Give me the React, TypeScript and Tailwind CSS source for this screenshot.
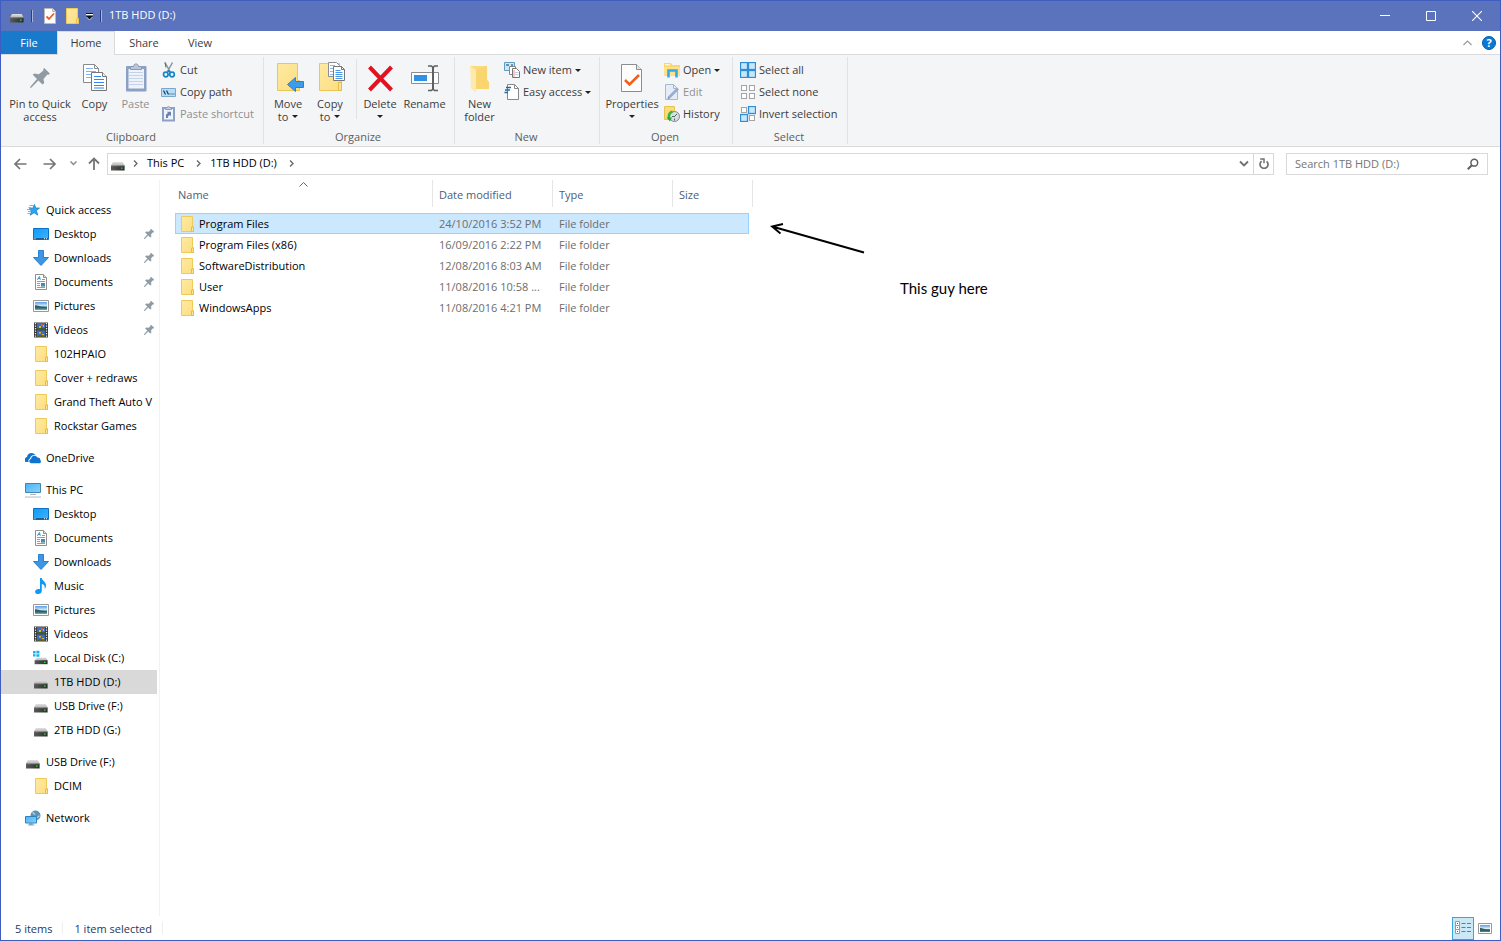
import type { ReactNode } from "react";

type IconProps = { className?: string };

function Art({ w, h, children, className = "" }: { w: number; h: number; children: ReactNode; className?: string }) {
  return (
    <svg width={w} height={h} viewBox={`0 0 ${w} ${h}`} fill="none" aria-hidden="true" className={`shrink-0 ${className}`}>
      {children}
    </svg>
  );
}

function Gradients() {
  return (
    <svg width="0" height="0" className="absolute" aria-hidden="true">
      <defs>
        <linearGradient id="folder" x1="0" y1="0" x2="1" y2="1">
          <stop offset="0" stopColor="#ffeaa2" />
          <stop offset="1" stopColor="#fcdd80" />
        </linearGradient>
        <linearGradient id="screen" x1="0" y1="0" x2="1" y2="1">
          <stop offset="0" stopColor="#4ab4f5" />
          <stop offset="1" stopColor="#8bd2fb" />
        </linearGradient>
        <linearGradient id="desk" x1="0" y1="0" x2="1" y2="1">
          <stop offset="0" stopColor="#0f9bf8" />
          <stop offset="1" stopColor="#3fb3ff" />
        </linearGradient>
        <linearGradient id="lid" x1="0" y1="0" x2="0" y2="1">
          <stop offset="0" stopColor="#e2e2e2" />
          <stop offset="1" stopColor="#b4b4b4" />
        </linearGradient>
        <linearGradient id="case" x1="0" y1="0" x2="1" y2="0">
          <stop offset="0" stopColor="#5a5a5a" />
          <stop offset="1" stopColor="#2c2c2c" />
        </linearGradient>
        <linearGradient id="photo" x1="0" y1="0" x2="0" y2="1">
          <stop offset="0" stopColor="#5b9be6" />
          <stop offset="0.5" stopColor="#d9eef8" />
          <stop offset="0.6" stopColor="#3f7f78" />
          <stop offset="1" stopColor="#6fa4c4" />
        </linearGradient>
      </defs>
    </svg>
  );
}

const Folder = ({ className }: IconProps) => (
  <Art w={16} h={16} className={className}>
    <path d="M2.5.5h11v10h1v5h-12z" fill="url(#folder)" stroke="#eecb58" />
    <path d="M12.5 15.5v-4.5h2v4.5z" fill="#ffe695" stroke="#e6bd45" />
  </Art>
);

const Drive = ({ className }: IconProps) => (
  <Art w={16} h={16} className={className}>
    <path d="M3 6h9.6l2 3.5H1z" fill="url(#lid)" />
    <path d="M1 9.500h13.6v5H1z" fill="url(#case)" />
    <path d="M1 9.500h13.6v.7H1z" fill="#8d8d8d" />
    <path d="M11 11.500h1.600v1.300H11z" fill="#35e23c" />
  </Art>
);

const SystemDrive = () => (
  <Art w={16} h={16}>
    <path d="M0 1h2.6v2.4H0zM3.4.8H6.4v2.6h-3zM0 4.2h2.6v2.4H0zM3.4 4.2h3v2.6h-3z" fill="#16b2ef" />
    <path d="M4 7.5h8.8l1.8 2.8H2z" fill="url(#lid)" />
    <path d="M1.6 10.2h13v4h-13z" fill="url(#case)" />
    <path d="M11 11.8h1.6V13H11z" fill="#35e23c" />
  </Art>
);

const Desktop = () => (
  <Art w={16} h={16}>
    <path d="M.5 2.5h15v11H.5z" fill="url(#desk)" stroke="#0c71c2" />
    <path d="M1 12h14v1.5H1z" fill="#155f9e" />
    <path d="M1.5 12.3h1v1h-1zM11 12.3h1v1h-1zM13 12.3h1v1h-1z" fill="#fff" />
  </Art>
);

const Downloads = () => (
  <Art w={16} h={16}>
    <path d="M5.5.5h5v7h5L8 15.5.5 7.5h5z" fill="#3d96e4" stroke="#2f7fcb" />
  </Art>
);

const Documents = () => (
  <Art w={16} h={16}>
    <path d="M2.5.5h8l3 3v12h-11z" fill="#fff" stroke="#8f8f8f" />
    <path d="M10.5.5v3h3" fill="#ddd" stroke="#8f8f8f" />
    <path d="M4.3 5.8 6.4 2.4l1 3.4M5 4.6h2" stroke="#2a8fc5" strokeWidth="0.9" />
    <path d="M9 5.5h3M4 7.5h8M4 9.5h3M4 11.5h3M4 13.5h8" stroke="#62aadb" />
    <path d="M8 9h4v3.4H8z" fill="#4d86b3" />
    <path d="M8 11h4v1.4H8z" fill="#4b9a79" />
  </Art>
);

const Pictures = () => (
  <Art w={16} h={16}>
    <path d="M.5 2.5h15v11H.5z" fill="#fff" stroke="#989898" />
    <path d="M2 4h12v8H2z" fill="url(#photo)" />
    <path d="M2 7.2c3 0 4.5 1.5 12 2v1.2H2z" fill="#2f6265" />
  </Art>
);

const Videos = () => (
  <Art w={16} h={16}>
    <path d="M1 .5h14v15H1z" fill="#39393b" />
    <path d="M4 1h8v6.5H4zM4 8.5h8V15H4z" fill="#3b6ec0" />
    <path d="M4 6h2l2-1 1 1h3v1.500H4z" fill="#46592a" />
    <path d="M6 4h2v2H6zM10 3h1v2h-1zM6 10h2v1.500H6zM9 12h2v1H9z" fill="#e3b42c" />
    <path d="M4 14l3-1 2 1h3v1H4z" fill="#5a5c2d" />
    <path d="M8 2h2v2H8z" fill="#d95a38" />
    <path d="M2.500 1v15M13.500 1v15" stroke="#f2f2f2" strokeWidth="1.2" strokeDasharray="1.2 1.3" />
  </Art>
);

const Music = () => (
  <Art w={16} h={16}>
    <path d="M7 0h1.8c.3 2.7 4.2 3.8 4.2 7.4 0 1.4-.6 2.6-1.4 3.600.7-3-.6-4.500-2.800-5v7c0 1.800-1.700 3-3.700 3-1.700 0-3-.9-3-2.300 0-1.600 1.700-2.700 3.500-2.700.5 0 1 .1 1.400.2z" fill="#0f98f4" />
  </Art>
);

const Star = () => (
  <Art w={16} h={16}>
    <path d="m9.500 2.500 1.200 3.500 3.800.1-3.100 2.500 1.300 4.500-3.600-2.400-3.900 2.500 1.400-4.300L4 6.900l3.700-.6z" fill="#2fa3ee" stroke="#1c83cc" strokeWidth="0.8" />
    <path d="M4.500 3.500h4M3.500 5.500h3M2 7.500h3M3 9.500h3M2.500 11.500h3" stroke="#58b4ee" strokeWidth="0.9" />
  </Art>
);

const Cloud = () => (
  <Art w={16} h={16}>
    <path d="M.6 12A3 3 0 0 1 2 6.900C2.300 4.500 4.300 3 6.500 3c1.600 0 3 .8 3.800 2.100-2.800-.5-4.800.9-5.300 3.300-1.500.6-2 2.200-1.300 3.600z" fill="#0f74cf" />
    <path d="M6.500 13.200c-2.900 0-3-3.900-.4-4.200.2-3.400 4.700-4.400 6.200-1.400 2.300-.3 3.200 1.300 2.900 2.400 1.300.7.900 3.200-.9 3.200z" fill="#0f74cf" />
  </Art>
);

const Computer = () => (
  <Art w={16} h={16}>
    <path d="M.5 1.500h15v9H.5z" fill="url(#screen)" stroke="#4386ad" />
    <path d="M5 12.500h6M0 15h16" stroke="#a9b5bd" />
    <path d="M2 14.500h12" stroke="#dbe2e6" />
  </Art>
);

const Network = () => (
  <Art w={16} h={16}>
    <circle cx="10.5" cy="5.5" r="5" fill="#5e93b3" />
    <path d="M7.500 2.500c1.500.3 1.500 1.800 2.700 2M12.500 8c0-1.500 1-2 2.200-2.200" stroke="#b5d6e8" strokeWidth="1.3" />
    <path d="M.5 6.500h11v6.500H.5z" fill="url(#screen)" stroke="#2f83bd" />
    <path d="M4.500 13.500h3v1h-3zM3 15h6.500" fill="#5f8faa" stroke="#7ba3ba" strokeWidth="0.9" />
  </Art>
);

const pinPath =
  "M14.3 0 20 5.7 18.3 6.7 17.3 6.4 13.5 11 14.2 15 12.5 16.5 8.4 12.4 1.5 19.4 0 20 .5 18.5 7 11 2.7 6.8 4.3 5.4 8.8 6.2 13.4 2.6 13.2 1.2Z";

const SmallPin = () => (
  <svg width="10" height="10" viewBox="0 0 20 20" aria-hidden="true" className="shrink-0">
    <path d={pinPath} fill="#8f9ba3" stroke="#8f9ba3" />
  </svg>
);

const BigPin = () => (
  <Art w={32} h={32}>
    <path d={pinPath} transform="translate(6 6)" fill="#8f9aa2" />
  </Art>
);

const BigCopy = () => (
  <Art w={32} h={32}>
    <path d="M4.500 2.500h11l4 4v14h-15z" fill="#fff" stroke="#8a8a8a" />
    <path d="M15.500 2.500v4h4" stroke="#8a8a8a" />
    <path d="M7 6.500h7M7 9.500h10M7 12.500h10M7 15.500h10" stroke="#7db2f5" />
    <path d="M12.500 10.500h11l4 4v14h-15z" fill="#fff" stroke="#777" />
    <path d="M23.500 10.500v4h4" fill="#eee" stroke="#777" />
    <path d="M15 14.500h7M15 17.500h10M15 20.500h10M15 23.500h10M15 26h10" stroke="#2f86f5" />
  </Art>
);

const BigPaste = () => (
  <Art w={32} h={32}>
    <path d="M7 4h18.500q1 0 1 1v23.500q0 1-1 1H7q-1 0-1-1V5q0-1 1-1z" fill="#8c9fc4" />
    <path d="M8.500 7h15.500v19.500H8.500z" fill="#edf2fb" />
    <path d="M9 10.500h14M9 13.500h14M9 16.500h14M9 19.500h14M9 22.500h14" stroke="#c6d2ea" />
    <path d="M10.500 7.500V4.500h3c0-3.500 5-3.500 5 0h3v3z" fill="#bac5d8" stroke="#8b99b5" />
  </Art>
);

const Scissors = () => (
  <Art w={16} h={16}>
    <path d="m4 .5 5 9M11.500.5l-5 9" stroke="#8b9499" strokeWidth="1.5" />
    <path d="m4 .5 1 5" stroke="#596870" />
    <circle cx="4.800" cy="12.500" r="2.300" stroke="#1685cc" strokeWidth="1.7" />
    <circle cx="11" cy="12.500" r="2.300" stroke="#1685cc" strokeWidth="1.7" />
    <path d="m7.800 8.500-1.800 2.500M7.800 8.500l2 2.500" stroke="#1685cc" strokeWidth="1.5" />
  </Art>
);

const CopyPath = () => (
  <Art w={16} h={16}>
    <path d="M.5 4.500h14v8H.5z" fill="#b6defa" stroke="#7aa7cb" />
    <path d="m2.500 6.500 2 4M5.500 6.500l2 4" stroke="#163b57" strokeWidth="1.2" />
    <path d="M8.500 10h1M10.500 10h1M12.500 10h1" stroke="#163b57" />
  </Art>
);

const PasteShortcut = () => (
  <Art w={16} h={16}>
    <path d="M1 1h13v14.500H1z" fill="#8da1c6" />
    <path d="M3 3h9v10.500H3z" fill="#eff4fc" />
    <path d="M4.500 3.500V1.500h1.500q1.500-2 3 0h1.500v2z" fill="#c4cede" stroke="#8b9bb7" />
    <path d="M5 12V8.500l2-1.500-1.200-1.200H10v4.400L8.700 9 7 10.500V12z" fill="#6c82ae" />
  </Art>
);

const MoveTo = () => (
  <Art w={32} h={32}>
    <path d="M5.500 1.500h20v17h2v10h-22z" fill="url(#folder)" stroke="#eac756" />
    <path d="M15.500 22.500l8-7v4h8v6h-8v4z" fill="#3f9cec" stroke="#2c80cc" />
  </Art>
);

const CopyTo = () => (
  <Art w={32} h={32}>
    <path d="M5.500 1.500h20v17h2v10h-22z" fill="url(#folder)" stroke="#eac756" />
    <path d="M24.500 28.500v-8h3v8z" fill="#ffe391" stroke="#e4bc45" />
    <path d="M14.500.5h8l3 3v11h-11z" fill="#fff" stroke="#8e8e8e" />
    <path d="M16 3.500h5M16 6.500h7M16 9.500h7M16 12.500h7" stroke="#8fb9e8" />
    <path d="M19.500 4.500h8l3 3v11h-11z" fill="#fff" stroke="#777" />
    <path d="M27.500 4.500v3h3" stroke="#777" />
    <path d="M21.500 8.500h5M21.500 10.500h7M21.500 12.500h7M21.500 14.500h7M21.500 16.500h7" stroke="#4b94e8" />
  </Art>
);

const DeleteIcon = () => (
  <Art w={32} h={32}>
    <path d="m5.500 5 22 23M27.500 5 5.500 28" stroke="#df1420" strokeWidth="4" />
  </Art>
);

const RenameIcon = () => (
  <Art w={32} h={32}>
    <path d="M2.500 10.500h27v11h-27z" fill="#fff" stroke="#8d8d8d" />
    <path d="M5 13h13v6H5z" fill="#2f92e8" />
    <path d="M24 5v23" stroke="#606060" strokeWidth="2" />
    <path d="M19 4h3.500l1.500 1.500L25.500 4H29M19 28.500h3.500L24 27l1.500 1.500H29" stroke="#606060" strokeWidth="1.6" />
  </Art>
);

const NewFolderIcon = () => (
  <Art w={32} h={32}>
    <path d="M6 4h17v14l2 2v7H10z" fill="#fbdb7e" />
    <path d="M6 4l6 4v22.500l-5-4z" fill="#ffeaae" />
    <path d="M12 8l11-4v14l2 2v7H12z" fill="#f9d570" />
  </Art>
);

const NewItem = () => (
  <Art w={16} h={16}>
    <path d="M.5.5h10v8H.5z" fill="#cfe6f5" stroke="#5f9cc0" />
    <path d="M2 3h3M7 3h2" stroke="#347aa8" strokeWidth="1.5" />
    <path d="M5.500 4.500h6v8h-6z" fill="#fff" stroke="#888" />
    <path d="M8.500 6.500h4l3 3v6h-7z" fill="#fff" stroke="#777" />
    <path d="M10 8v7" stroke="#f09090" />
    <path d="M11 10.500h3.500M11 12.500h3.500" stroke="#bdd0e4" />
  </Art>
);

const EasyAccess = () => (
  <Art w={16} h={16}>
    <path d="M3.500.5h7l4 4v11h-11z" fill="#fff" stroke="#888" />
    <path d="M10.500.5v4h4" stroke="#888" />
    <path d="M2 3.500h5M1 6h5M.500 8.500h3.500" stroke="#24679f" strokeWidth="1.3" />
  </Art>
);

const PropertiesIcon = () => (
  <Art w={32} h={32}>
    <path d="M5.500 2.500h15l5 5v22h-20z" fill="#fdfdfd" stroke="#8d8d8d" />
    <path d="M20.500 2.500v5h5" fill="#e6e6e6" stroke="#8d8d8d" />
    <path d="m9 18 4.500 4.500L23 13" stroke="#f0601f" strokeWidth="2.6" />
  </Art>
);

const OpenIcon = () => (
  <Art w={16} h={16}>
    <path d="M0 1h7l1.500 2H16v11H0z" fill="#f8d770" />
    <path d="M1 2h5v1.500H1z" fill="#fff4cd" />
    <path d="M0 5h16v9H0z" fill="#ffe18b" />
    <path d="M4.500 15.500V8.500h8v7" stroke="#35abe5" strokeWidth="2.6" />
  </Art>
);

const EditIcon = () => (
  <Art w={16} h={16}>
    <path d="M1.500.5h8l4 4v11h-12z" fill="#e6edf8" stroke="#a8b8d2" />
    <path d="M9.500.5v4h4" stroke="#a8b8d2" />
    <path d="m14 4.500-9 9" stroke="#98add0" strokeWidth="2.6" />
    <path d="m3.500 15 .5-2.500 2 2z" fill="#7389b2" />
  </Art>
);

const HistoryIcon = () => (
  <Art w={16} h={16}>
    <path d="M.5.5h10v13H.5z" fill="#fbdc77" stroke="#e7c452" />
    <circle cx="10.500" cy="10.500" r="5" fill="#d7dee2" stroke="#7b8a91" />
    <path d="M10.500 10.500 13 8M8 10.500h3M10.500 12.500v2" stroke="#59656c" />
    <path d="M8.500 5.500C5 6.500 4 10 5.500 13" stroke="#34b73d" strokeWidth="2.5" />
    <path d="M2.500 11.500h5.500l-2 4z" fill="#2aa838" />
  </Art>
);

const squareSpots = [
  [0, 0],
  [8, 0],
  [0, 8],
  [8, 8],
];

function Squares({ on }: { on: boolean[] }) {
  return (
    <Art w={16} h={16}>
      {squareSpots.map(([x, y], i) =>
        on[i] ? (
          <rect key={i} x={x + 0.5} y={y + 0.5} width="7" height="7" fill="#c9e7fb" stroke="#2e8fd9" strokeWidth="1.3" />
        ) : (
          <rect key={i} x={x + 1.5} y={y + 1.5} width="5" height="5" fill="#fff" stroke="#a4a4a4" />
        ),
      )}
    </Art>
  );
}

const Caret = () => (
  <Art w={6} h={3}>
    <path d="M0 0h6L3 3z" fill="#222" />
  </Art>
);

function BigButton({ icon, lines, width, caret, disabled }: { icon: ReactNode; lines: string[]; width: string; caret?: boolean; disabled?: boolean }) {
  return (
    <button type="button" disabled={disabled} className={`flex flex-col items-center pt-[3px] whitespace-nowrap disabled:text-[#909090] ${width}`}>
      {icon}
      <span className="mt-[3px] flex flex-col items-center leading-[13px]">
        {lines.map((line, i) => (
          <span key={line} className="flex items-center gap-1">
            {line}
            {caret && i === 1 && <Caret />}
          </span>
        ))}
      </span>
      {caret && lines.length === 1 && (
        <span className="mt-[5px]">
          <Caret />
        </span>
      )}
    </button>
  );
}

function SmallButton({ icon, label, caret, disabled }: { icon: ReactNode; label: string; caret?: boolean; disabled?: boolean }) {
  return (
    <button type="button" disabled={disabled} className="flex h-[22px] items-center gap-[3px] whitespace-nowrap disabled:text-[#909090]">
      {icon}
      {label}
      {caret && <Caret />}
    </button>
  );
}

function Group({ label, width, children }: { label: string; width: string; children: ReactNode }) {
  return (
    <section aria-label={label} className={`flex shrink-0 flex-col border-r border-[#e1e2e4] pt-[2px] ${width}`}>
      <div className="flex h-[70px] items-start">{children}</div>
      <div className="pr-[2px] text-center leading-[15px] text-[#5d5d5d]">{label}</div>
    </section>
  );
}

function Ribbon() {
  return (
    <div className="flex h-[92px] items-start border-b border-[#d9dadc] bg-[#f4f5f7] pt-[2px] text-[#3c3c3c]">
      <Group label="Clipboard" width="w-[263px]">
        <BigButton icon={<BigPin />} lines={["Pin to Quick", "access"]} width="w-[78px]" />
        <BigButton icon={<BigCopy />} lines={["Copy"]} width="w-[31px]" />
        <BigButton icon={<BigPaste />} lines={["Paste"]} width="w-[51px]" disabled />
        <div>
          <SmallButton icon={<Scissors />} label="Cut" />
          <SmallButton icon={<CopyPath />} label="Copy path" />
          <SmallButton icon={<PasteShortcut />} label="Paste shortcut" disabled />
        </div>
      </Group>
      <Group label="Organize" width="w-[191px]">
        <BigButton icon={<MoveTo />} lines={["Move", "to"]} width="w-[48px]" caret />
        <BigButton icon={<CopyTo />} lines={["Copy", "to"]} width="w-[36px]" caret />
        <div className="ml-2 h-[60px] w-px bg-[#e1e2e4]" />
        <BigButton icon={<DeleteIcon />} lines={["Delete"]} width="w-[46px]" caret />
        <BigButton icon={<RenameIcon />} lines={["Rename"]} width="w-[43px]" />
      </Group>
      <Group label="New" width="w-[145px]">
        <BigButton icon={<NewFolderIcon />} lines={["New", "folder"]} width="w-[49px]" />
        <div>
          <SmallButton icon={<NewItem />} label="New item" caret />
          <SmallButton icon={<EasyAccess />} label="Easy access" caret />
        </div>
      </Group>
      <Group label="Open" width="w-[133px]">
        <BigButton icon={<PropertiesIcon />} lines={["Properties"]} width="w-[64px]" caret />
        <div>
          <SmallButton icon={<OpenIcon />} label="Open" caret />
          <SmallButton icon={<EditIcon />} label="Edit" disabled />
          <SmallButton icon={<HistoryIcon />} label="History" />
        </div>
      </Group>
      <Group label="Select" width="w-[115px]">
        <div className="pl-[7px]">
          <SmallButton icon={<Squares on={[true, true, true, true]} />} label="Select all" />
          <SmallButton icon={<Squares on={[false, false, false, false]} />} label="Select none" />
          <SmallButton icon={<Squares on={[false, true, true, false]} />} label="Invert selection" />
        </div>
      </Group>
    </div>
  );
}

const TitleDivider = () => <span className="ml-[6px] h-3 w-[2px] border-r border-[#a9b4dc] bg-[#2f3e7a]" />;

function TitleBar() {
  return (
    <header className="flex h-[30px] items-center bg-[#5b72bd] text-white">
      <div className="flex items-center pl-2">
        <Drive />
        <TitleDivider />
        <button type="button" aria-label="Properties" className="ml-[9px]">
          <Art w={16} h={16}>
            <path d="M2.500.5h8l3 3v12h-11z" fill="#fff" stroke="#b9b9b9" />
            <path d="M10.500.5v3h3" fill="#ddd" stroke="#b9b9b9" />
            <path d="m4.500 8.500 2.500 2.500 5-5.500" stroke="#ee5a24" strokeWidth="1.8" />
          </Art>
        </button>
        <button type="button" aria-label="New folder" className="ml-[6px]">
          <Folder />
        </button>
        <button type="button" aria-label="Customize Quick Access Toolbar" className="ml-[6px]">
          <Art w={8} h={8}>
            <path d="M0 2h7v1H0z" fill="#fff" />
            <path d="M0 1h7v1H0zM0 4h7L3.500 7.500z" fill="#111" />
            <path d="m.5 5 3 3 3-3" stroke="#fff" strokeWidth="0.6" />
          </Art>
        </button>
        <TitleDivider />
      </div>
      <h1 className="ml-[7px] pb-[2px]">1TB HDD (D:)</h1>
      <div className="ml-auto flex h-full">
        <button type="button" aria-label="Minimize" className="grid w-[46px] place-items-center">
          <Art w={10} h={10}>
            <path d="M0 4.500h10" stroke="#fff" />
          </Art>
        </button>
        <button type="button" aria-label="Maximize" className="grid w-[46px] place-items-center">
          <Art w={10} h={10}>
            <path d="M.5.5h9v9h-9z" stroke="#fff" />
          </Art>
        </button>
        <button type="button" aria-label="Close" className="grid w-[46px] place-items-center">
          <Art w={10} h={10}>
            <path d="m0 0 10 10M10 0 0 10" stroke="#fff" strokeWidth="1.1" />
          </Art>
        </button>
      </div>
    </header>
  );
}

function Tabs() {
  return (
    <nav className="flex h-6 border-b border-[#d9dadc] bg-white text-[#3c3c3c]">
      <button type="button" className="w-14 bg-[#1979ca] text-white">File</button>
      <button type="button" className="-mb-px w-[58px] border-x border-t border-[#d9dadc] bg-[#f4f5f7] pb-[2px]">Home</button>
      <button type="button" className="w-[58px]">Share</button>
      <button type="button" className="w-[54px]">View</button>
      <div className="ml-auto flex items-center gap-[10px] pr-1">
        <button type="button" aria-label="Minimize the Ribbon">
          <Art w={9} h={6}>
            <path d="m.5 5 4-4 4 4" stroke="#9a9a9a" strokeWidth="1.2" />
          </Art>
        </button>
        <button type="button" aria-label="Help" className="grid size-[14px] place-items-center rounded-full border border-[#0b5ba5] bg-[#0a78d7] font-bold text-white">
          <span className="leading-3">?</span>
        </button>
      </div>
    </nav>
  );
}

const Crumb = () => (
  <Art w={5} h={7}>
    <path d="m1 .5 3 3-3 3" stroke="#666" strokeWidth="1.3" />
  </Art>
);

function AddressRow() {
  return (
    <div className="flex h-[33px] items-center pr-3 pl-3">
      <button type="button" aria-label="Back">
        <Art w={14} h={12}>
          <path d="M13.500 6H2M7 1 2 6l5 5" stroke="#757575" strokeWidth="1.7" />
        </Art>
      </button>
      <button type="button" aria-label="Forward" className="ml-4">
        <Art w={14} h={12}>
          <path d="M.5 6H12M7 1l5 5-5 5" stroke="#757575" strokeWidth="1.7" />
        </Art>
      </button>
      <button type="button" aria-label="Recent locations" className="ml-[13px]">
        <Art w={7} h={5}>
          <path d="m.5.5 3 3 3-3" stroke="#8a8a8a" strokeWidth="1.5" />
        </Art>
      </button>
      <button type="button" aria-label="Up" className="ml-[11px]">
        <Art w={12} h={13}>
          <path d="M6 13V2M1 6.500l5-5 5 5" stroke="#757575" strokeWidth="1.8" />
        </Art>
      </button>
      <div className="ml-[7px] flex h-[22px] min-w-0 flex-1 items-center border border-[#d9d9d9] bg-white">
        <div className="flex items-center pl-[2px]">
          <Drive />
          <span className="ml-[7px]"><Crumb /></span>
          <a href="#this-pc" className="ml-[9px] pb-px">This PC</a>
          <span className="ml-3"><Crumb /></span>
          <a href="#drive-d" className="ml-[9px] pb-px">1TB HDD (D:)</a>
          <span className="ml-3"><Crumb /></span>
        </div>
        <button type="button" aria-label="Previous locations" className="mr-1 ml-auto">
          <Art w={10} h={7}>
            <path d="m1 1.500 4 4 4-4" stroke="#707070" strokeWidth="1.8" />
          </Art>
        </button>
        <button type="button" aria-label="Refresh" className="grid h-full w-5 place-items-center border-l border-[#d9d9d9]">
          <Art w={10} h={11}>
            <path d="M2.600 3.200A4 4 0 1 0 7.600 3.300" stroke="#707070" strokeWidth="1.7" />
            <path d="M1.200 1H5v4.200" stroke="#707070" strokeWidth="1.5" />
          </Art>
        </button>
      </div>
      <label className="ml-3 flex h-[22px] w-[202px] items-center border border-[#d9d9d9] bg-white pr-2 pl-2">
        <span className="sr-only">Find</span>
        <input type="text" placeholder="Search 1TB HDD (D:)" className="h-5 min-w-0 flex-1 bg-transparent leading-5 outline-none placeholder:text-[#757575]" />
        <Art w={12} h={12}>
          <circle cx="7.300" cy="4.700" r="3.400" stroke="#5f5f5f" strokeWidth="1.5" />
          <path d="m4.800 7.200-4 4" stroke="#5f5f5f" strokeWidth="2" />
        </Art>
      </label>
    </div>
  );
}

type Item = { icon: ReactNode; label: string; pinned?: boolean; selected?: boolean };
type Section = { icon: ReactNode; label: string; items: Item[] };

const sections: Section[] = [
  {
    icon: <Star />,
    label: "Quick access",
    items: [
      { icon: <Desktop />, label: "Desktop", pinned: true },
      { icon: <Downloads />, label: "Downloads", pinned: true },
      { icon: <Documents />, label: "Documents", pinned: true },
      { icon: <Pictures />, label: "Pictures", pinned: true },
      { icon: <Videos />, label: "Videos", pinned: true },
      { icon: <Folder />, label: "102HPAIO" },
      { icon: <Folder />, label: "Cover + redraws" },
      { icon: <Folder />, label: "Grand Theft Auto V" },
      { icon: <Folder />, label: "Rockstar Games" },
    ],
  },
  { icon: <Cloud />, label: "OneDrive", items: [] },
  {
    icon: <Computer />,
    label: "This PC",
    items: [
      { icon: <Desktop />, label: "Desktop" },
      { icon: <Documents />, label: "Documents" },
      { icon: <Downloads />, label: "Downloads" },
      { icon: <Music />, label: "Music" },
      { icon: <Pictures />, label: "Pictures" },
      { icon: <Videos />, label: "Videos" },
      { icon: <SystemDrive />, label: "Local Disk (C:)" },
      { icon: <Drive />, label: "1TB HDD (D:)", selected: true },
      { icon: <Drive />, label: "USB Drive (F:)" },
      { icon: <Drive />, label: "2TB HDD (G:)" },
    ],
  },
  { icon: <Drive />, label: "USB Drive (F:)", items: [{ icon: <Folder />, label: "DCIM" }] },
  { icon: <Network />, label: "Network", items: [] },
];

function Sidebar() {
  return (
    <nav aria-label="Navigation pane" className="flex w-[159px] shrink-0 flex-col gap-2 border-r border-[#f2f2f2] pt-[18px] pr-[2px]">
      {sections.map((section) => (
        <ul key={section.label}>
          <li>
            <a href="#folder" className="flex h-6 items-center gap-[5px] pl-6 whitespace-nowrap">
              {section.icon}
              {section.label}
            </a>
          </li>
          {section.items.map((item) => (
            <li key={item.label}>
              <a href="#folder" className={`flex h-6 items-center gap-[5px] pl-8 whitespace-nowrap ${item.selected ? "bg-[#d9d9d9]" : ""}`}>
                {item.icon}
                {item.label}
                {item.pinned && (
                  <span className="mr-[3px] ml-auto">
                    <SmallPin />
                  </span>
                )}
              </a>
            </li>
          ))}
        </ul>
      ))}
    </nav>
  );
}

const files = [
  { name: "Program Files", date: "24/10/2016 3:52 PM" },
  { name: "Program Files (x86)", date: "16/09/2016 2:22 PM" },
  { name: "SoftwareDistribution", date: "12/08/2016 8:03 AM" },
  { name: "User", date: "11/08/2016 10:58 ..." },
  { name: "WindowsApps", date: "11/08/2016 4:21 PM" },
];

const headCell = "flex h-[27px] items-center border-r border-[#e5e5e5] pt-[3px]";

function FileTable() {
  return (
    <table className="w-[574px] table-fixed border-collapse text-left text-[#6d6d6d]">
      <colgroup>
        <col className="w-[258px]" />
        <col className="w-[120px]" />
        <col className="w-[120px]" />
        <col className="w-[76px]" />
      </colgroup>
      <thead className="text-[#4c607a]">
        <tr>
          <th className="relative p-0 pb-[6px] font-normal">
            <div className={`${headCell} pl-[3px]`}>Name</div>
            <span className="absolute inset-x-0 top-[2px] flex justify-center pr-[2px]">
              <Art w={9} h={5}>
                <path d="m.5 4.500 4-4 4 4" stroke="#666" />
              </Art>
            </span>
          </th>
          <th className="p-0 pb-[6px] font-normal"><div className={`${headCell} pl-[6px]`}>Date modified</div></th>
          <th className="p-0 pb-[6px] font-normal"><div className={`${headCell} pl-[6px]`}>Type</div></th>
          <th className="p-0 pb-[6px] font-normal"><div className={`${headCell} -mr-1 pl-[6px]`}>Size</div></th>
        </tr>
      </thead>
      <tbody>
        {files.map((file, i) => (
          <tr key={file.name} className={`h-[21px] ${i === 0 ? "bg-[#cce8ff] outline outline-1 -outline-offset-1 outline-[#99d1ff]" : ""}`}>
            <td className="p-0 text-black">
              <span className="flex items-center gap-1 pl-1">
                <Folder />
                {file.name}
              </span>
            </td>
            <td className="p-0 pl-[6px] whitespace-nowrap">{file.date}</td>
            <td className="p-0 pl-[6px]">File folder</td>
            <td className="p-0" />
          </tr>
        ))}
      </tbody>
    </table>
  );
}

function StatusBar() {
  return (
    <footer className="flex h-6 items-center pl-[14px] text-[#1e395b]">
      <span className="pt-[2px]">5 items</span>
      <span className="ml-[10px] h-3 w-px bg-[#eee]" />
      <span className="ml-[11px] pt-[2px]">1 item selected</span>
      <span className="ml-[10px] h-3 w-px bg-[#eee]" />
      <div className="ml-auto flex items-center gap-1 pr-2">
        <button type="button" aria-label="Details view" className="grid h-[23px] w-[22px] place-items-center border border-[#3ba4d8] bg-[#cbe8f6]">
          <Art w={16} h={14}>
            <path d="M.5.5h4v4h-4zM.5 4.500h4v4h-4zM.5 8.500h4v4h-4z" fill="#fff" stroke="#9a9a9a" />
            <path d="M2 2h1v1H2z" fill="#555" />
            <path d="M2 6h1v1H2z" fill="#3b86df" />
            <path d="M2 10h1v1H2z" fill="#e02020" />
            <path d="M6.500 2.500h4M12 2.500h4M6.500 6.500h4M12 6.500h4M6.500 10.500h4M12 10.500h4" stroke="#777" />
          </Art>
        </button>
        <button type="button" aria-label="Large icons view">
          <Art w={14} h={11}>
            <path d="M.5.5h13v10H.5z" fill="#fff" stroke="#989898" />
            <path d="M2 2h10v7H2z" fill="url(#photo)" />
            <path d="M2 5c3 0 4 1.500 10 2v1.500H2z" fill="#2f6265" />
          </Art>
        </button>
      </div>
    </footer>
  );
}

export default function App() {
  return (
    <div className="flex min-h-screen flex-col border border-[#3f5cc0] bg-white font-['Open_Sans','Noto_Sans',sans-serif] text-[11px] leading-4 text-black">
      <Gradients />
      <TitleBar />
      <Tabs />
      <Ribbon />
      <AddressRow />
      <div className="flex flex-1">
        <Sidebar />
        <main className="relative flex-1 pl-[15px]">
          <FileTable />
          <svg width="96" height="34" viewBox="0 0 96 34" fill="none" aria-hidden="true" className="absolute top-[42px] left-[610px]">
            <path d="M94 30.500 2 4.500M13 2 2 4.500l8.500 7" stroke="#000" strokeWidth="1.9" />
          </svg>
          <p className="absolute top-[98px] left-[740px] font-['Lato',sans-serif] text-[15px] leading-5 whitespace-nowrap">This guy here</p>
        </main>
      </div>
      <StatusBar />
    </div>
  );
}
